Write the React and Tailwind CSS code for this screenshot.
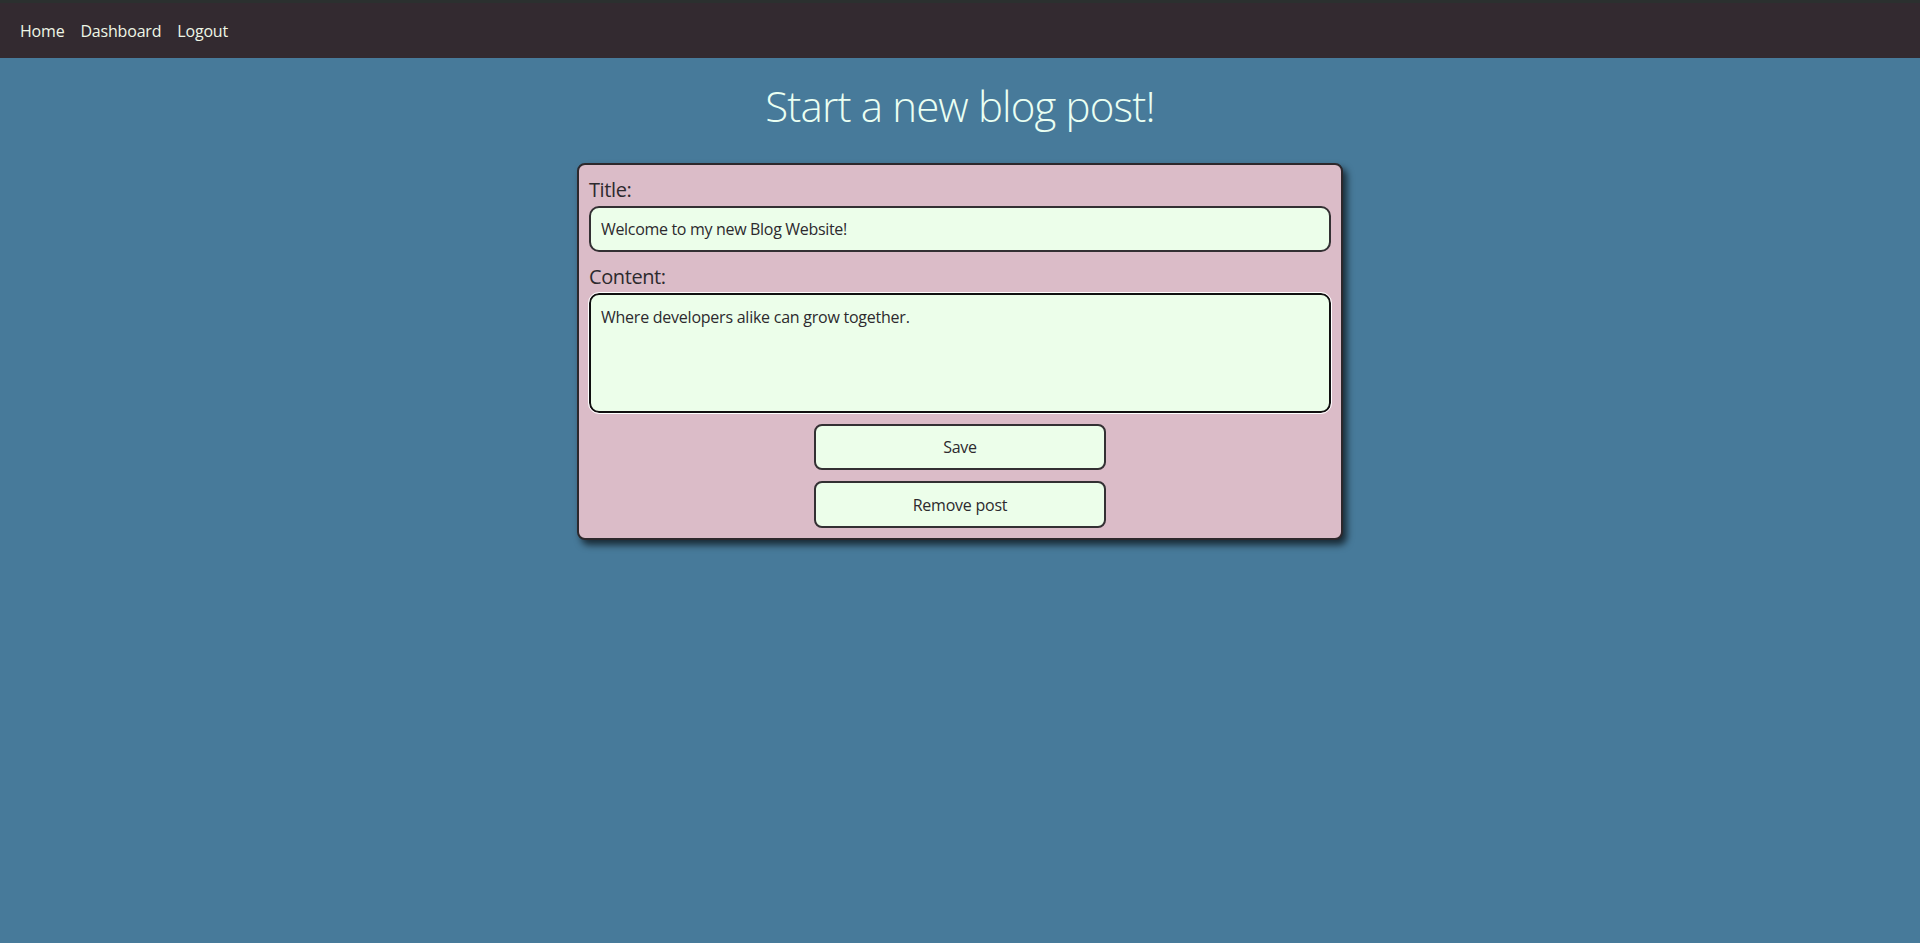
import React, { useState } from 'react';

const NavBar = () => {
  return (
    <nav className="bg-[#332a30] border-t-[3px] border-[#2b302f]">
      <ul className="h-[55px] flex items-center gap-[16px] px-[20px] text-[16px] leading-[24px] tracking-[-0.012em] text-[#eef6e6]">
        <li><a href="#">Home</a></li>
        <li><a href="#">Dashboard</a></li>
        <li><a href="#">Logout</a></li>
      </ul>
    </nav>
  );
};

const App = () => {
  const [formData, setFormData] = useState({
    title: 'Welcome to my new Blog Website!',
    content: 'Where developers alike can grow together.'
  });

  const handleChange = (e) => {
    setFormData({ ...formData, [e.target.name]: e.target.value });
  };

  return (
    <div className="min-h-screen bg-[#477a9a] font-['Open_Sans',sans-serif]">
      <NavBar />

      <main className="flex flex-col items-center">
        <h1 className="mt-[19px] mb-[29px] text-[42px] leading-[57px] font-light tracking-[-0.02em] text-[#eafff2]">
          Start a new blog post!
        </h1>

        {/* Post form */}
        <form
          onSubmit={(e) => e.preventDefault()}
          className="w-[766px] bg-[#dbbcc8] border-2 border-[#2d282c] rounded-[8px] p-[10px] pt-[10px] flex flex-col shadow-[4px_5px_7px_rgba(0,0,0,0.65)] text-[#2d2a2e] tracking-[-0.025em]"
        >
          <label className="block text-[20px] leading-[30px] mb-[1px]">Title:</label>
          <input
            type="text"
            name="title"
            value={formData.title}
            onChange={handleChange}
            className="h-[46px] w-full bg-[#ecfeea] border-2 border-[#333033] rounded-[10px] px-[10px] text-[16px] tracking-[-0.02em] text-[#2d2a2e] outline-none"
          />

          <label className="block text-[20px] leading-[30px] mt-[10px] mb-[1px]">Content:</label>
          <textarea
            name="content"
            value={formData.content}
            onChange={handleChange}
            className="h-[120px] w-full bg-[#ecfeea] border-2 border-[#101010] rounded-[10px] px-[10px] py-[10px] text-[16px] leading-[24px] tracking-[-0.015em] text-[#2d2a2e] resize-none outline outline-1 outline-white"
          />

          <div className="flex flex-col items-center gap-[11px] mt-[11px]">
            <button
              type="submit"
              className="w-[292px] h-[46px] bg-[#ecfeea] border-2 border-[#333033] rounded-[8px] text-[16px] tracking-[-0.015em] text-[#2d2a2e]"
            >
              Save
            </button>
            <button
              type="button"
              className="w-[292px] h-[47px] bg-[#ecfeea] border-2 border-[#333033] rounded-[8px] text-[16px] tracking-[-0.015em] text-[#2d2a2e]"
            >
              Remove post
            </button>
          </div>
        </form>
      </main>
    </div>
  );
};

export default App;
